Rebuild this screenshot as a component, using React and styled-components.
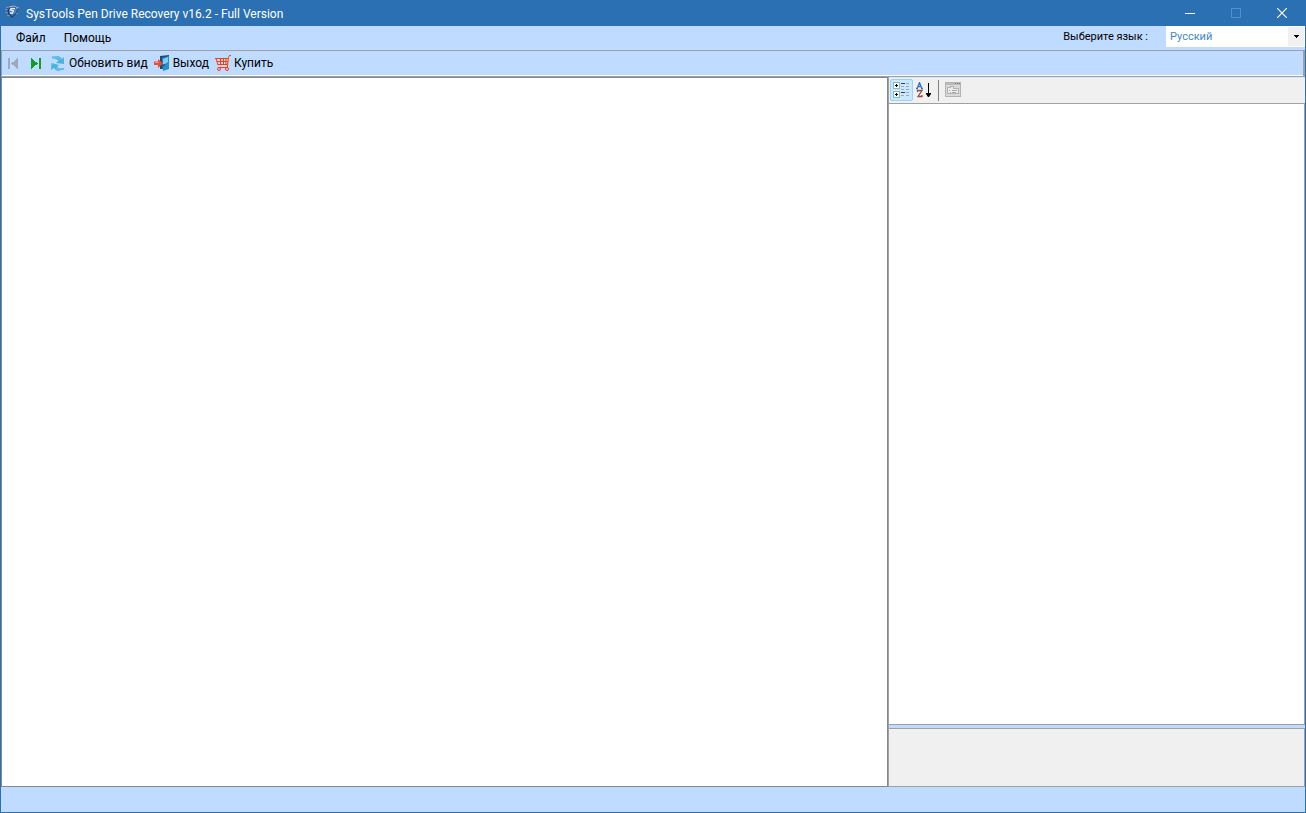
import React from "react";
import styled, { createGlobalStyle } from "styled-components";

const GlobalStyle = createGlobalStyle`
  * { box-sizing: border-box; }
  body { margin: 0; }
  button, select { font: inherit; color: inherit; margin: 0; }
`;

const Window = styled.div`
  display: flex;
  flex-direction: column;
  min-height: 100vh;
  border: 1px solid #2a70b2;
  border-top: 0;
  background: #bfdbff;
  color: #000;
  font: 12px/16px Roboto, "Noto Sans", sans-serif;
`;

const TitleBar = styled.header`
  display: flex;
  align-items: center;
  height: 26px;
  padding-left: 3px;
  background: #2a70b2;
  color: #fff;
`;

const Title = styled.h1`
  flex: 1;
  margin: 2px 0 0 6px;
  font: inherit;
`;

const CaptionButton = styled.button`
  display: flex;
  align-items: center;
  justify-content: center;
  width: 46px;
  height: 26px;
  padding: 0;
  border: 0;
  background: transparent;
`;

const MenuBar = styled.nav`
  display: flex;
  align-items: center;
  height: 24px;
  padding-left: 6px;
`;

const MenuItem = styled.button`
  padding: 0 9px;
  border: 0;
  background: transparent;
`;

const Language = styled.div`
  display: flex;
  align-items: center;
  gap: 18px;
  margin-left: auto;
  height: 100%;
`;

const LanguageLabel = styled.label`
  font-size: 11px;
  padding-bottom: 2px;
`;

const SelectBox = styled.div`
  display: flex;
  align-items: center;
  align-self: flex-start;
  position: relative;
  width: 139px;
  height: 21px;
  background: #fff;
`;

const Select = styled.select`
  appearance: none;
  width: 100%;
  height: 100%;
  padding: 1px 20px 0 4px;
  border: 0;
  background: transparent;
  color: #3f88c5;
  font-size: 11px;
`;

const SelectArrow = styled.span`
  position: absolute;
  right: 1px;
  top: 1px;
  bottom: 1px;
  display: flex;
  align-items: center;
  justify-content: center;
  width: 16px;
  background: #f0f0f0;
  pointer-events: none;
`;

const ToolBar = styled.div`
  display: flex;
  align-items: center;
  height: 27px;
  padding: 0 1px 1px;
  border: 1px solid #a0a0a0;
  border-right-width: 2px;
  box-shadow: inset 0 -1px #fff;
`;

const ToolButton = styled.button`
  display: flex;
  align-items: center;
  gap: 3px;
  height: 22px;
  padding: 0 3px;
  border: 0;
  background: transparent;
  white-space: nowrap;
`;

const Workspace = styled.main`
  flex: 1;
  display: grid;
  grid-template-columns: minmax(0, 1fr) 417px;
`;

const ContentPane = styled.section`
  border: 1px solid #828790;
  background: #fff;
`;

const PropertyPane = styled.aside`
  display: flex;
  flex-direction: column;
  gap: 3px;
  border-left: 1px solid #a0a0a0;
`;

const PropertyUpper = styled.div`
  flex: 1;
  display: flex;
  flex-direction: column;
`;

const PropertyBar = styled.div`
  display: flex;
  align-items: center;
  height: 26px;
  padding: 0 0 1px 1px;
  border-top: 1px solid #d8e6f6;
  background: #f0f0f0;
`;

const PropertyButton = styled.button`
  display: flex;
  align-items: center;
  justify-content: flex-start;
  width: 23px;
  height: 22px;
  padding: 0 0 0 2px;
  border: 1px solid ${(p) => (p.$active ? "#99d1ff" : "transparent")};
  border-radius: 2px;
  background: ${(p) => (p.$active ? "#cce8ff" : "transparent")};
`;

const Divider = styled.span`
  width: 1px;
  height: 21px;
  margin: 0 3px 0 2px;
  background: #808080;
`;

const PropertyGrid = styled.div`
  flex: 1;
  border: 1px solid #a0a0a0;
  border-left: 0;
  background: #fff;
`;

const Description = styled.div`
  height: 59px;
  border: 1px solid #a0a0a0;
  border-left: 0;
  background: #f0f0f0;
`;

const StatusBar = styled.footer`
  height: 25px;
`;

const Icon = ({ children, w = 16, h = 16, crisp }) => (
  <svg width={w} height={h} viewBox={`0 0 ${w} ${h}`} fill="none" aria-hidden="true" shapeRendering={crisp ? "crispEdges" : undefined}>
    {children}
  </svg>
);

const AppIcon = () => (
  <Icon>
    <path d="M3 4l2-2 5-1 4 2-1 5-5 5-4-4z" fill="#203f78" />
    <path d="M5 4l7-1 1 2-1 3-4 3-3-3z" fill="#477bbd" />
    <path d="M1 4l3 1M1 7l3 1M12 4l3-2M12 9l2-1M3 10l3 1M2 2l3 1" stroke="#8f93a3" />
    <path d="M11 3.500H7L6.500 5l3 1-1 2H6" stroke="#e6efff" strokeWidth="1.300" />
    <path d="M5 2l5-1 4 2" stroke="#a9bddb" />
  </Icon>
);

const FirstIcon = () => (
  <Icon crisp>
    <path d="M2 3h2v11H2z" fill="#9da9b7" />
    <path d="M12 3v11L5 8.500z" fill="#9da9b7" />
  </Icon>
);

const LastIcon = () => (
  <Icon crisp>
    <path d="M3 3v11l7-5.500z" fill="#139b2d" />
    <path d="M11 3h2v11h-2z" fill="#139b2d" />
  </Icon>
);

const RefreshIcon = () => (
  <Icon>
    <path d="M2 1.500L8 1Q11 2 12 4L14 2 14 9 6 8 8.500 6Q7 3 2 3.500z" fill="#4bb2df" />
    <path d="M14 14.500L8 16Q5 15 4 13L1 15 1.500 8 9 10 7 12Q9 14 14 13z" fill="#4bb2df" />
    <path d="M3 2.500Q8 1 10.500 5M6 13Q8 15 12 14" stroke="#77cbed" />
  </Icon>
);

const ExitIcon = () => (
  <Icon>
    <path d="M6 1l9-1v14H6z" fill="#194d72" />
    <path d="M8 3L15 1v13l-6 2z" fill="#298fc8" />
    <path d="M9 4l5-2v5l-5 3z" fill="#83cdef" />
    <path d="M10 9v2" stroke="#0b324f" />
    <path d="M0 6.500h4V4l5 4.500L4 13v-3H0z" fill="#ee4836" />
    <path d="M1 7.500h4" stroke="#ff8b79" />
  </Icon>
);

const CartIcon = () => (
  <Icon>
    <g shapeRendering="crispEdges">
      <path d="M0 3.500h13M2 6.500h11M3 9.500h9M5.500 4v6M8.500 4v6M3 12.500h10" stroke="#fa3c0c" />
    </g>
    <path d="M1 3.500l2 6.500M13.500 2.500l-1 7.500v2M13.500 2.500l1-2H16" stroke="#fa3c0c" />
    <path d="M11 4v5.500" stroke="#fa3c0c" />
    <circle cx="4" cy="14" r="1.500" stroke="#fa3c0c" />
    <circle cx="12" cy="14" r="1.500" stroke="#fa3c0c" />
  </Icon>
);

const CategoryIcon = () => (
  <Icon crisp>
    {[0, 9].map((y) => (
      <g key={y} transform={`translate(0 ${y})`}>
        <rect x="0.500" y="0.500" width="6" height="6" rx="1" fill="#fff" stroke="#8fb9b6" />
        <path d="M2 3.500h3M3.500 2v3" stroke="#000" />
        <path d="M8 1.500h4" stroke="#303f55" />
      </g>
    ))}
    <path d="M8 4.500h3M8 7.500h3M8 13.500h3" stroke="#a6a9b4" />
    <path d="M13 1.500h3M13 4.500h3M13 7.500h3M13 10.500h3M13 13.500h3" stroke="#94a6ca" />
  </Icon>
);

const SortIcon = () => (
  <Icon>
    <path d="M1 7L3.500 .5 6 7M2 4.500h3M0 6.500h2M5 6.500h2" stroke="#3573c5" strokeWidth="1.300" />
    <path d="M1.500 10V8.500H6L2 14.500h4V13" stroke="#914e48" strokeWidth="1.300" />
    <path d="M12.500 1v11" stroke="#000" shapeRendering="crispEdges" />
    <path d="M10 11h5v1l-2 3h-1l-2-3z" fill="#000" />
  </Icon>
);

const PagesIcon = () => (
  <Icon crisp>
    <rect x="0.500" y="0.500" width="15" height="14" fill="#d9d9d9" stroke="#b3b3b3" />
    <path d="M1 2h14" stroke="#bababa" strokeWidth="2" />
    <path d="M10 1.500h1M12 1.500h1M14 1.500h1" stroke="#777" />
    <path d="M2.500 5.500h3v-1h3v2h5v5h-11z" fill="#ececec" stroke="#b3b3b3" />
    <path d="M4 8.500h1M7 8.500h5M5 10.500h1M7 10.500h4" stroke="#aaa" />
  </Icon>
);

export default function App() {
  return (
    <Window>
      <GlobalStyle />
      <TitleBar>
        <AppIcon />
        <Title>SysTools Pen Drive Recovery v16.2 - Full Version</Title>
        <CaptionButton aria-label="Minimize">
          <Icon w={10} h={10} crisp><path d="M0 5.500h10" stroke="#fff" /></Icon>
        </CaptionButton>
        <CaptionButton aria-label="Maximize" disabled>
          <Icon w={10} h={10} crisp><rect x="0.500" y="0.500" width="9" height="9" stroke="#5292ca" /></Icon>
        </CaptionButton>
        <CaptionButton aria-label="Close">
          <Icon w={10} h={10}><path d="M0 0l10 10M10 0L0 10" stroke="#fff" strokeWidth="1.200" /></Icon>
        </CaptionButton>
      </TitleBar>
      <MenuBar>
        <MenuItem>Файл</MenuItem>
        <MenuItem>Помощь</MenuItem>
        <Language>
          <LanguageLabel htmlFor="language">Выберите язык :</LanguageLabel>
          <SelectBox>
            <Select id="language" defaultValue="ru">
              <option value="ru">Русский</option>
            </Select>
            <SelectArrow>
              <Icon w={5} h={3} crisp><path d="M0 0h5v1H0zM1 1h3v1H1zM2 2h1v1H2z" fill="#000" /></Icon>
            </SelectArrow>
          </SelectBox>
        </Language>
      </MenuBar>
      <ToolBar role="toolbar">
        <ToolButton aria-label="В начало" disabled><FirstIcon /></ToolButton>
        <ToolButton aria-label="В конец"><LastIcon /></ToolButton>
        <ToolButton><RefreshIcon />Обновить вид</ToolButton>
        <ToolButton><ExitIcon />Выход</ToolButton>
        <ToolButton><CartIcon />Купить</ToolButton>
      </ToolBar>
      <Workspace>
        <ContentPane />
        <PropertyPane>
          <PropertyUpper>
            <PropertyBar role="toolbar">
              <PropertyButton aria-label="По категориям" $active><CategoryIcon /></PropertyButton>
              <PropertyButton aria-label="По алфавиту"><SortIcon /></PropertyButton>
              <Divider />
              <PropertyButton aria-label="Страницы свойств" disabled><PagesIcon /></PropertyButton>
            </PropertyBar>
            <PropertyGrid />
          </PropertyUpper>
          <Description />
        </PropertyPane>
      </Workspace>
      <StatusBar />
    </Window>
  );
}
